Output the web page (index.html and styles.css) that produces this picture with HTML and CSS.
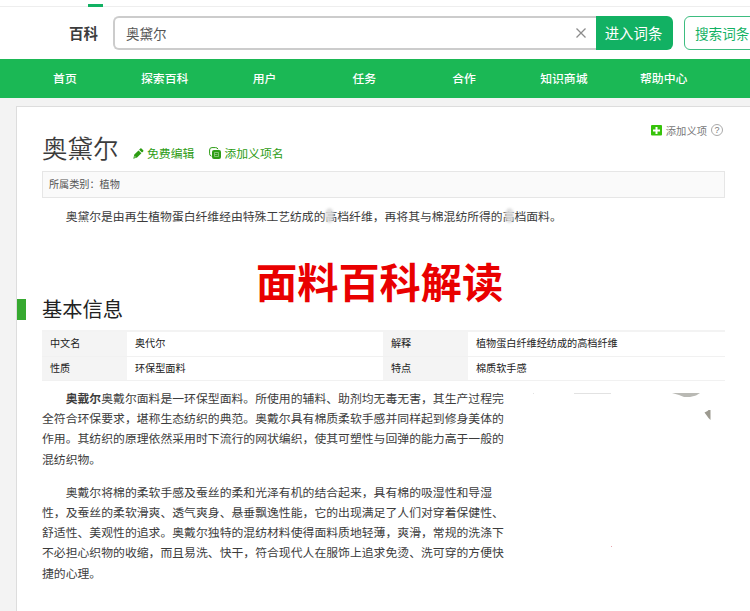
FILE: index.html
```html
<!DOCTYPE html>
<html lang="zh-CN">
<head>
    <meta charset="UTF-8">
    <meta name="viewport" content="width=device-width, initial-scale=1.0">
    <title>奥黛尔</title>
    <link rel="stylesheet" href="styles.css">
</head>
<body>
    <div class="top-strip"><span class="top-tab"></span></div>
    <header class="header">
        <div class="brand">百科</div>
        <div class="search-box">
            <span class="search-text">奥黛尔</span>
            <svg class="clear" width="10" height="10" viewBox="0 0 10 10"><path d="M.5.5l9 9M9.500.5l-9 9" stroke="#8c8c8c" stroke-width="1.300" fill="none"/></svg>
        </div>
        <button class="enter-btn">进入词条</button>
        <button class="search-btn">搜索词条</button>
    </header>
    <nav class="nav">
        <a>首页</a>
        <a>探索百科</a>
        <a>用户</a>
        <a>任务</a>
        <a>合作</a>
        <a>知识商城</a>
        <a>帮助中心</a>
    </nav>

    <main class="panel">
        <div class="title-row">
            <h1>奥黛尔</h1>
            <a class="action edit">
                <svg width="11" height="11" viewBox="0 0 11 11"><path d="M7.300.6q.6-.5 1.200 0l1.700 1.600q.6.600 0 1.200L9 4.600 6.100 1.800zM5.500 2.400l2.900 2.900-4.300 4.200L.3 10.700 1.300 6.600zM1.800 8.100l-.4 1.500 1.500-.4z" fill="#2c9c13" fill-rule="evenodd"/></svg>
                <span>免费编辑</span>
            </a>
            <a class="action">
                <svg width="12" height="12" viewBox="0 0 12 12"><path d="M2.500 9.200Q.6 8.700.6 6.800V3Q.6.600 3 .6h3.500q2 0 2.500 1.600" fill="none" stroke="#2c9c13" stroke-width="1"/><rect x="3" y="3" width="9" height="9" rx="2" fill="#2c9c13"/><path d="M5.500 5.500h4v4h-4zM5.500 7.500h3" fill="none" stroke="#b9dfb0" stroke-width=".6"/></svg>
                <span>添加义项名</span>
            </a>
            <a class="add-sense">
                <svg width="11" height="11" viewBox="0 0 11 11"><rect width="11" height="10.500" rx="1" fill="#36c30a"/><path d="M5.500 2v7M2 5.500h7" stroke="#fff" stroke-width="2"/></svg>
                <span>添加义项</span>
                <span class="help">?</span>
            </a>
        </div>
        <div class="category">所属类别：植物</div>
        <p class="summary">奥黛尔是由再生植物蛋白纤维经由特殊工艺纺成的<span class="smudge">高</span>档纤维，再将其与棉混纺所得的<span class="smudge second">高</span>档面料。</p>
        <div class="banner">面料百科解读</div>
        <h2>基本信息</h2>
        <dl class="info">
            <dt>中文名</dt><dd>奥代尔</dd>
            <dt>解释</dt><dd>植物蛋白纤维经纺成的高档纤维</dd>
            <dt>性质</dt><dd>环保型面料</dd>
            <dt>特点</dt><dd>棉质软手感</dd>
        </dl>
        <div class="content">
            <article class="article">
                <p><b>奥戴尔</b>奥戴尔面料是一环保型面料。所使用的辅料、助剂均无毒无害，其生产过程完<br>全符合环保要求，堪称生态纺织的典范。奥戴尔具有棉质柔软手感并同样起到修身美体的<br>作用。其纺织的原理依然采用时下流行的网状编织，使其可塑性与回弹的能力高于一般的<br>混纺织物。</p>
                <p>奥戴尔将棉的柔软手感及蚕丝的柔和光泽有机的结合起来，具有棉的吸湿性和导湿<br>性，及蚕丝的柔软滑爽、透气爽身、悬垂飘逸性能，它的出现满足了人们对穿着保健性、<br>舒适性、美观性的追求。奥戴尔独特的混纺材料使得面料质地轻薄，爽滑，常规的洗涤下<br>不必担心织物的收缩，而且易洗、快干，符合现代人在服饰上追求免烫、洗可穿的方便快<br>捷的心理。</p>
            </article>
            <svg class="picture" width="200" height="170" viewBox="0 0 200 170">
                <path d="M43 .5h37M2 .5h1" stroke="#e2e2e2" stroke-width="1"/>
                <path d="M141 0h28l-4 2.500-6 1.500h-6l-5-2z" fill="#b9b9b4"/>
                <path d="M173.500 19.500l3-1.500 1-1h2V27l-2-2z" fill="#9c9a90"/>
                <rect x="80" y="153" width="1" height="1" fill="#e8a5ae"/>
            </svg>
        </div>
    </main>
</body>
</html>
```

FILE: styles.css
```css
* {
    box-sizing: border-box;
}
body {
    margin: 0;
    height: 611px;
    overflow: hidden;
    background: #f3f3f3;
    color: #3c3c3c;
    font-family: "Noto Sans CJK SC", sans-serif;
    font-size: 11.85px;
}
h1, h2, p, dl, dd {
    margin: 0;
    font-weight: normal;
}
.top-strip {
    height: 7px;
    padding: 4px 0 0 88px;
    background: #fff;
    border-bottom: 1px solid #eee;
}
.top-tab {
    display: block;
    width: 15px;
    height: 3px;
    background: #12b163;
}
.header {
    display: flex;
    height: 52px;
    padding: 9px 0 0 69px;
    background: #fff;
}
.brand {
    flex: none;
    width: 44px;
    font-size: 14.5px;
    font-weight: bold;
    line-height: 33px;
}
.search-box {
    display: flex;
    flex: none;
    align-items: center;
    justify-content: space-between;
    width: 483px;
    height: 34px;
    padding: 0 10px 0 11px;
    border: 2px solid #ccc;
    border-right: none;
    border-radius: 6px 0 0 6px;
    color: #555;
    font-size: 13.5px;
}
.enter-btn, .search-btn {
    flex: none;
    height: 34px;
    padding: 0 0 1px;
    border: none;
    font-family: inherit;
    font-size: 14.4px;
    white-space: nowrap;
}
.enter-btn {
    width: 77px;
    padding-right: 2px;
    border-radius: 0 6px 6px 0;
    background: #12b163;
    color: #fff;
}
.search-btn {
    width: 88px;
    margin-left: 11px;
    padding-left: 10px;
    border: 1px solid #3dbd80;
    border-radius: 6px;
    background: #fff;
    color: #12b163;
    font-size: 13.6px;
    text-align: left;
}
.nav {
    display: flex;
    height: 39px;
    padding-left: 15px;
    background: #1bb855;
    color: #fff;
    font-weight: 500;
    line-height: 38px;
    text-align: center;
}
.nav a {
    width: 99.8px;
}
.panel {
    height: 520px;
    margin: 8px 0 0 16px;
    padding: 20px 0 0 25px;
    border: 1px solid #ddd;
    border-right: none;
    background: #fff;
}
.title-row {
    display: flex;
    height: 44px;
    width: 683px;
}
h1 {
    width: 91px;
    font-size: 25.5px;
    font-weight: 350;
    line-height: 40px;
}
.action {
    display: flex;
    align-items: center;
    gap: 3px;
    height: 18px;
    margin: 16px 15px 0 0;
    color: #2c9c13;
}
.action svg {
    margin-top: 2px;
}
.add-sense {
    display: flex;
    align-items: center;
    height: 14px;
    margin: -4px 2px 0 auto;
    color: #777;
    font-size: 10.3px;
}
.add-sense svg {
    margin-right: 4px;
}
.help {
    width: 12px;
    height: 12px;
    margin-left: 4px;
    border: 1px solid #aaa;
    border-radius: 50%;
    font-family: "Liberation Sans", sans-serif;
    font-size: 9px;
    line-height: 10px;
    text-align: center;
}
.category {
    width: 683px;
    height: 27px;
    padding-left: 6px;
    border: 1px solid #e6e6e6;
    background: #fafafa;
    color: #555;
    font-size: 10.15px;
    line-height: 24px;
}
.summary {
    height: 65px;
    padding-top: 8px;
    text-indent: 2em;
    font-size: 11.82px;
    line-height: 20px;
}
.smudge {
    position: relative;
}
.smudge::after {
    content: "";
    position: absolute;
    left: -1px;
    top: 1px;
    width: 9px;
    height: 15px;
    border-radius: 50%;
    background: #ddd;
    opacity: 0.9;
    filter: blur(1px);
}
.smudge.second::after {
    left: 2px;
}
.banner {
    width: 683px;
    height: 36px;
    padding-left: 214px;
    color: #e90000;
    font-size: 41.2px;
    font-weight: bold;
    line-height: 34px;
}
h2 {
    height: 21px;
    margin-left: -25px;
    padding-left: 16px;
    border-left: 9px solid #36a930;
    font-size: 20.3px;
    line-height: 18px;
    color: #222;
}
.info {
    display: grid;
    grid-template-columns: 85px 256px 85px 257px;
    width: 683px;
    margin-top: 10px;
    border-top: 2px solid #f3f3f3;
    color: #222;
    font-size: 10.15px;
    line-height: 22px;
}
.info dt, .info dd {
    height: 24.5px;
    padding-left: 8px;
    border-bottom: 1px solid #f1f1f1;
}
.info dt {
    background: #f4f4f4;
}
.content {
    display: flex;
    gap: 15px;
    padding-top: 7px;
}
.article {
    width: 474px;
    line-height: 20.2px;
    white-space: nowrap;
}
.article p {
    margin-bottom: 13px;
    text-indent: 2em;
}
.picture {
    margin-top: 5px;
}
```
